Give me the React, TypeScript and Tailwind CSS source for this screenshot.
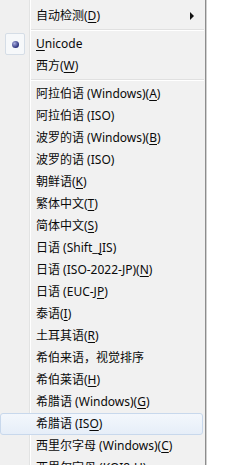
import React from "react";

type Item =
  | { sep: true }
  | {
      sep?: false;
      label: React.ReactNode;
      checked?: boolean;
      arrow?: boolean;
      hl?: boolean;
    };

const U = ({ c }: { c: string }) => <span className="underline underline-offset-[2px]">{c}</span>;

const items: Item[] = [
  { label: <>自动检测(<U c="D" />)</>, arrow: true },
  { sep: true },
  { label: <><U c="U" />nicode</>, checked: true },
  { label: <>西方(<U c="W" />)</> },
  { sep: true },
  { label: <>阿拉伯语 (Windows)(<U c="A" />)</> },
  { label: <>阿拉伯语 (ISO)</> },
  { label: <>波罗的语 (Windows)(<U c="B" />)</> },
  { label: <>波罗的语 (ISO)</> },
  { label: <>朝鲜语(<U c="K" />)</> },
  { label: <>繁体中文(<U c="T" />)</> },
  { label: <>简体中文(<U c="S" />)</> },
  { label: <>日语 (Shift_<U c="J" />IS)</> },
  { label: <>日语 (ISO-2022-JP)(<U c="N" />)</> },
  { label: <>日语 (EUC-J<U c="P" />)</> },
  { label: <>泰语(<U c="I" />)</> },
  { label: <>土耳其语(<U c="R" />)</> },
  { label: <>希伯来语，视觉排序</> },
  { label: <>希伯莱语(<U c="H" />)</> },
  { label: <>希腊语 (Windows)(<U c="G" />)</> },
  { label: <>希腊语 (IS<U c="O" />)</>, hl: true },
  { label: <>西里尔字母 (Windows)(<U c="C" />)</> },
  { label: <>西里尔字母 (KOI8-U)</> },
];

export default function App() {
  return (
    <div
      className="w-[227px] h-[465px] overflow-hidden bg-white flex text-[12px] text-[#0a0a0a]"
      style={{ fontFamily: '"Noto Sans", "Noto Sans CJK SC", sans-serif' }}
    >
      <div className="w-[206px] shrink-0 h-full border-r border-[#8c8c8c] pt-[5px] bg-[linear-gradient(to_right,#f0f0f0_29px,#e2e3e3_29px,#e2e3e3_30px,#ffffff_30px,#ffffff_31px,#f1f1f1_31px)]">
        {items.map((it, i) =>
          it.sep ? (
            <div key={i} className="h-[6px] flex flex-col justify-center ml-[31px] mr-[1px]">
              <div className="h-px bg-[#e0e0e0]" />
              <div className="h-px bg-white" />
            </div>
          ) : (
            <div
              key={i}
              className={
                "h-[22px] flex items-center relative " +
                (it.hl
                  ? "ml-0 mr-[2px] rounded-[3px] border border-[#c8d8ec] bg-[linear-gradient(to_bottom,#f3f7fc,#e6eef8)]"
                  : "")
              }
            >
              <div className="w-[36px] h-full shrink-0 flex items-center pl-[5px]">
                {it.checked && (
                  <div className="w-[20px] h-[22px] rounded-[2px] border border-[#d5dde6] bg-[#f6f8fa] flex items-center justify-center">
                    <div className="w-[7px] h-[7px] rounded-full bg-[radial-gradient(circle_at_35%_35%,#a9aee0,#2b317c_70%)]" />
                  </div>
                )}
              </div>
              <div className={"whitespace-nowrap leading-none " + (it.hl ? "-ml-px" : "")}>{it.label}</div>
              {it.arrow && (
                <svg className="absolute left-[189px] top-[7px]" width="6" height="8" viewBox="0 0 6 8">
                  <path d="M1 0 L5 4 L1 8 Z" fill="#111" />
                </svg>
              )}
            </div>
          )
        )}
      </div>
      <div className="w-px h-full bg-[#d0d0d0]" />
    </div>
  );
}
